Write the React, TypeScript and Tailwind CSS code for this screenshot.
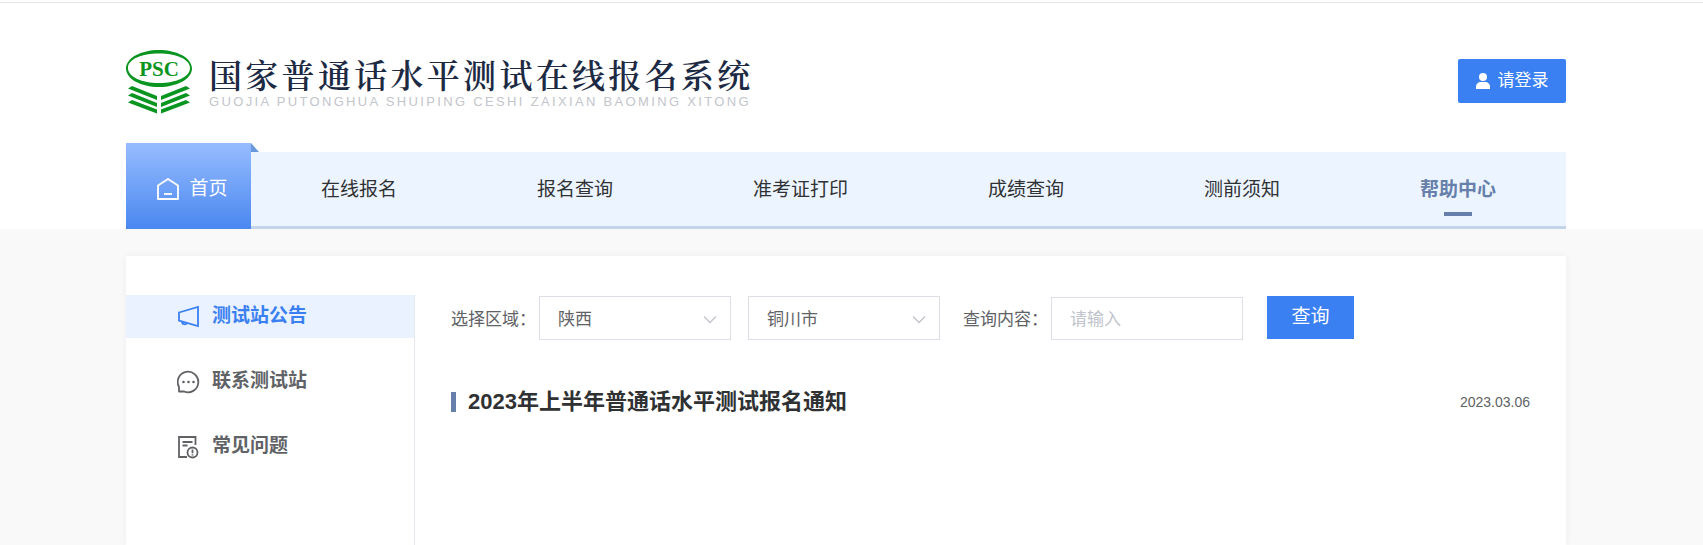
import { useState } from "react";

const navItems = ["在线报名", "报名查询", "准考证打印", "成绩查询", "测前须知", "帮助中心"];

const MegaphoneIcon = () => (
    <svg width="23" height="24" viewBox="0 0 23 24" fill="none" stroke="currentColor" strokeWidth="1.8">
        <path d="M2 7.500 21 2v19L2 15.500z" />
        <path d="M5 16.500c0 3.200 4 3.600 5 1.400" />
    </svg>
);

const ChatIcon = () => (
    <svg width="23" height="24" viewBox="0 0 23 24" fill="none" stroke="currentColor" strokeWidth="1.8">
        <path d="M2 21.500V17A10.300 10.300 0 1 1 7 21.500z" strokeLinejoin="round" />
        <g fill="currentColor" stroke="none">
            <circle cx="6.500" cy="12" r="1.300" />
            <circle cx="11.500" cy="12" r="1.300" />
            <circle cx="16.500" cy="12" r="1.300" />
        </g>
    </svg>
);

const QuestionIcon = () => (
    <svg width="23" height="24" viewBox="0 0 23 24" fill="none" stroke="currentColor" strokeWidth="1.8">
        <path d="M18.500 10V2H2v20h8" />
        <path d="M5.500 7h10M5.500 10.500h5" />
        <circle cx="15.500" cy="17.500" r="5" />
        <path d="M15.500 14.500v3.700M15.500 19.200v1.400" />
    </svg>
);

const sideItems = [
    { label: "测试站公告", icon: MegaphoneIcon },
    { label: "联系测试站", icon: ChatIcon },
    { label: "常见问题", icon: QuestionIcon },
];

const Logo = () => (
    <svg width="66" height="64" viewBox="0 0 66 64" role="img" aria-label="PSC">
        <path
            fillRule="evenodd"
            fill="#0a9420"
            d="M33 0C51 0 66 8 66 18.500S51 37 33 37 0 29 0 18.500 15 0 33 0zM33 3.500C16 3.500 2 9 2 18S16 33 33 33s31-6 31-15S50 3.500 33 3.500z"
        />
        <text x="33" y="25.500" textAnchor="middle" fontSize="21" fontWeight="700" fontFamily="Liberation Serif, serif" fill="#0a9420">
            PSC
        </text>
        <g fill="#0a9420">
            <path d="M2 38.500 6 36 31 46v4z" />
            <path d="M2 45.500 6 43 31 53v4z" />
            <path d="M2 52.500 6 50 31 59.500v4z" />
            <path d="M64 38.500 60 36 35 46v4z" />
            <path d="M64 45.500 60 43 35 53v4z" />
            <path d="M64 52.500 60 50 35 59.500v4z" />
        </g>
    </svg>
);

const Chevron = () => (
    <svg
        className="pointer-events-none absolute right-3.5 top-4"
        width="14"
        height="14"
        viewBox="0 0 14 14"
        fill="none"
        stroke="#c0c4cc"
        strokeWidth="1.300"
    >
        <path d="M1 4.500l6 6 6-6" />
    </svg>
);

const App = () => {
    const [active, setActive] = useState(0);
    const [keyword, setKeyword] = useState("");

    return (
        <div className="min-h-screen bg-[#f9f9f9] font-['Liberation_Sans','Noto_Sans_CJK_SC',sans-serif] text-[#303133]">
            <header className="bg-white pt-0.5">
                <div className="border-t border-[#e4e4e4] pr-[11px]">
                    <div className="mx-auto max-w-[1440px]">
                        <div className="flex items-start justify-between pt-[47px]">
                            <div className="flex items-start gap-[17px]">
                                <Logo />
                                <div className="pt-1">
                                    <h1 className="whitespace-nowrap font-['Noto_Serif_CJK_SC','Noto_Sans_CJK_SC',serif] text-[33px] font-semibold leading-10 tracking-widest text-[#1d2a44]">
                                        国家普通话水平测试在线报名系统
                                    </h1>
                                    <p className="whitespace-nowrap text-[13px] leading-4 tracking-[0.18em] text-[#c3c5cb]">
                                        GUOJIA PUTONGHUA SHUIPING CESHI ZAIXIAN BAOMING XITONG
                                    </p>
                                </div>
                            </div>
                            <button className="mt-[9px] flex h-11 w-[108px] items-center justify-center gap-2 rounded-xs bg-[#3a80f2] text-[17px] text-white">
                                <svg width="14" height="16" viewBox="0 0 14 16" fill="currentColor">
                                    <circle cx="7" cy="4" r="4" />
                                    <path d="M0 16v-2c0-3 2-5 5-5h4c3 0 5 2 5 5v2z" />
                                </svg>
                                请登录
                            </button>
                        </div>

                        <nav className="mt-[29px] flex items-end">
                            <a
                                href="#home"
                                className="relative flex h-[86px] w-[125px] shrink-0 items-center justify-center gap-2.5 bg-linear-to-b from-[#96bcff] to-[#4a87ef] pl-2 pt-1.5 text-[19px] text-white"
                            >
                                <svg width="22" height="22" viewBox="0 0 22 22" fill="none" stroke="currentColor" strokeWidth="1.800" strokeLinejoin="round">
                                    <path d="M1 7.500 11 1l10 6.500V21H1z" />
                                    <path d="M7 16h8" />
                                </svg>
                                首页
                                <svg className="absolute left-full top-0" width="8" height="9" viewBox="0 0 8 9">
                                    <path d="M0 0l8 9H0z" fill="#6a98de" />
                                </svg>
                            </a>
                            <ul className="flex h-[77px] grow items-stretch justify-around border-b-3 border-[#c3d4e8] bg-[#ecf5ff] text-[19px]">
                                {navItems.map((item) => (
                                    <li key={item} className="flex">
                                        <a
                                            href="#nav"
                                            className={
                                                item === "帮助中心"
                                                    ? "relative flex items-center pt-0.5 font-bold text-[#6780ab]"
                                                    : "flex items-center pt-0.5"
                                            }
                                        >
                                            {item}
                                            {item === "帮助中心" && (
                                                <span className="absolute bottom-2.5 left-1/2 h-1 w-7 -translate-x-1/2 bg-[#6780ab]" />
                                            )}
                                        </a>
                                    </li>
                                ))}
                            </ul>
                        </nav>
                    </div>
                </div>
            </header>

            <main className="pr-[11px] pt-[27px]">
                <div className="mx-auto flex min-h-[calc(100vh-256px)] max-w-[1440px] bg-white pt-[39px] shadow-[0_0_8px_rgba(0,0,0,0.05)]">
                    <aside className="flex w-[289px] shrink-0 flex-col gap-[22px] border-r border-[#e4e7ed]">
                        {sideItems.map(({ label, icon: Icon }, i) => (
                            <button
                                key={label}
                                onClick={() => setActive(i)}
                                className={
                                    i === active
                                        ? "flex h-[43px] items-center gap-3 bg-[#e9f2fe] pl-[51px] text-[19px] font-bold text-[#3a80f2]"
                                        : "flex h-[43px] items-center gap-3 pl-[51px] text-[19px] font-bold text-[#606266]"
                                }
                            >
                                <Icon />
                                {label}
                            </button>
                        ))}
                    </aside>

                    <section className="grow px-9">
                        <form className="flex items-center text-[17px] text-[#606266]" onSubmit={(e) => e.preventDefault()}>
                            <label htmlFor="province" className="w-[88px] whitespace-nowrap pt-1">
                                选择区域：
                            </label>
                            <div className="relative mr-[17px]">
                                <select id="province" className="h-11 w-48 appearance-none border border-[#dcdfe6] bg-white px-[18px] pt-1">
                                    <option>陕西</option>
                                </select>
                                <Chevron />
                            </div>
                            <div className="relative mr-[23px]">
                                <select aria-label="城市" className="h-11 w-48 appearance-none border border-[#dcdfe6] bg-white px-[18px] pt-1">
                                    <option>铜川市</option>
                                </select>
                                <Chevron />
                            </div>
                            <label htmlFor="keyword" className="w-[88px] whitespace-nowrap pt-1">
                                查询内容：
                            </label>
                            <input
                                id="keyword"
                                value={keyword}
                                onChange={(e) => setKeyword(e.target.value)}
                                placeholder="请输入"
                                className="mr-6 mt-0.5 h-[43px] w-48 border border-[#dcdfe6] px-[18px] pt-0.5 placeholder:text-[#c0c4cc]"
                            />
                            <button type="submit" className="h-[43px] w-[87px] bg-[#3a80f2] text-[19px] text-white">
                                查询
                            </button>
                        </form>

                        <article className="mt-[46px] flex items-center justify-between">
                            <a href="#notice" className="flex items-center gap-3 text-[22px] font-bold leading-8">
                                <span className="h-5 w-[5px] bg-[#6780ab]" />
                                2023年上半年普通话水平测试报名通知
                            </a>
                            <time className="text-sm text-[#606266]">2023.03.06</time>
                        </article>
                    </section>
                </div>
            </main>
        </div>
    );
};

export default App;
